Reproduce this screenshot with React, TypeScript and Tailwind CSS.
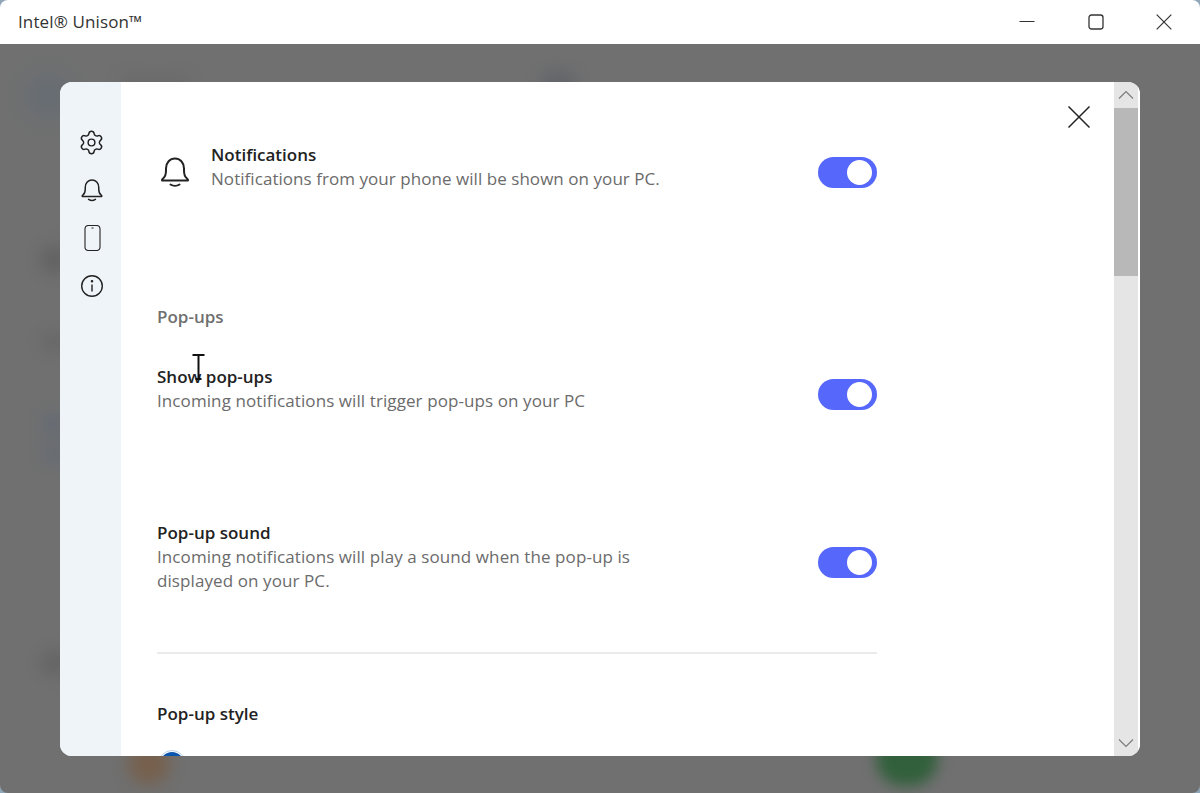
import React from "react";
import { Settings } from "lucide-react";

const font = { fontFamily: '"Open Sans", "Noto Sans", sans-serif' };

function Toggle() {
  return (
    <div className="flex h-[31px] w-[59px] shrink-0 items-center justify-end rounded-full bg-[#5668fb] pr-[5px]">
      <div className="h-[25px] w-[25px] rounded-full bg-white" />
    </div>
  );
}

function BellIcon({ size }: { size: number }) {
  return (
    <svg width={size} height={size} viewBox="0 0 32 32" fill="none" stroke="#222222" strokeWidth="2" strokeLinecap="round" strokeLinejoin="round">
      <path d="M3 24.500h26c.3-1-.3-1.500-1-2-2.500-1.800-3-4-3-8v-2C25 6.500 21 2.500 16 2.500S7 6.500 7 12.500v2c0 4-.5 6.200-3 8-.7.5-1.300 1-1 2Z" />
      <path d="M11.500 28.500c2.500 1.700 6.500 1.700 9 0" />
    </svg>
  );
}

function Row({ title, desc, top, toggleOffset }: { title: string; desc: React.ReactNode; top: string; toggleOffset: string }) {
  return (
    <div className={`flex w-[720px] items-start justify-between ${top}`}>
      <div>
        <div className="text-[17px] leading-[24px] font-semibold text-[#222222]">{title}</div>
        <div className="text-[17px] leading-[24px] tracking-[0.09px] text-[#6b6b6b]">{desc}</div>
      </div>
      <div className={toggleOffset}>
        <Toggle />
      </div>
    </div>
  );
}

export default function App() {
  return (
    <div className="h-[793px] w-[1200px] overflow-hidden bg-[#8fa6b8]" style={font}>
      <div className="flex h-full w-full flex-col overflow-hidden rounded-[8px]">
        <header className="flex h-[44px] shrink-0 items-center justify-between bg-white pr-[3px] pl-[18px]">
          <span className="text-[17px] leading-[20px] tracking-[0.12px] text-[#333333]">Intel® Unison™</span>
          <div className="flex items-center">
            <div className="flex h-[44px] w-[69px] items-center justify-center">
              <svg width="16" height="16" viewBox="0 0 16 16" stroke="#333333" strokeWidth="1" fill="none">
                <path d="M0.500 7.500h15" />
              </svg>
            </div>
            <div className="flex h-[44px] w-[69px] items-center justify-center">
              <svg width="16" height="16" viewBox="0 0 16 16" stroke="#333333" strokeWidth="1.300" fill="none">
                <rect x="1" y="1" width="14" height="14" rx="2.500" />
              </svg>
            </div>
            <div className="flex h-[44px] w-[67px] items-center justify-center">
              <svg width="16" height="16" viewBox="0 0 16 16" stroke="#333333" strokeWidth="1.200" fill="none">
                <path d="M0.700 0.700l14.600 14.600M15.300 0.700L0.700 15.300" />
              </svg>
            </div>
          </div>
        </header>

        <div className="relative min-h-0 flex-1 overflow-hidden bg-[#707070] pt-[38px] pl-[60px]">
          {/* Blurred app content behind the dialog */}
          <div className="absolute left-[26px] top-[30px] h-[44px] w-[44px] rounded-full bg-[#5c6a78] opacity-50 blur-[12px]" />
          <div className="absolute left-[120px] top-[32px] h-[12px] w-[70px] rounded-full bg-[#5e5e5e] opacity-40 blur-[8px]" />
          <div className="absolute left-[540px] top-[26px] h-[28px] w-[36px] rounded-full bg-[#5a5e66] opacity-60 blur-[8px]" />
          <div className="absolute left-[40px] top-[202px] h-[28px] w-[30px] rounded-full bg-[#555555] opacity-50 blur-[8px]" />
          <div className="absolute left-[40px] top-[288px] h-[20px] w-[30px] rounded-full bg-[#606060] opacity-50 blur-[8px]" />
          <div className="absolute left-[40px] top-[368px] h-[24px] w-[30px] rounded-full bg-[#5d6878] opacity-50 blur-[8px]" />
          <div className="absolute left-[40px] top-[402px] h-[18px] w-[30px] rounded-full bg-[#5d6878] opacity-50 blur-[8px]" />
          <div className="absolute left-[40px] top-[606px] h-[26px] w-[30px] rounded-full bg-[#5a5a5a] opacity-50 blur-[8px]" />
          <div className="absolute left-[128px] top-[700px] h-[40px] w-[42px] rounded-full bg-[#7a5a3e] opacity-70 blur-[8px]" />
          <div className="absolute left-[876px] top-[688px] h-[54px] w-[62px] rounded-full bg-[#32603c] blur-[7px]" />

          <div className="relative flex h-[674px] w-[1080px] overflow-hidden rounded-[12px] bg-white">
            <nav className="flex w-[61px] shrink-0 flex-col items-center gap-[24px] bg-[#eff4f9] pt-[48px] pl-[2px]">
              <Settings size={27} color="#222222" strokeWidth={1.300} className="-my-[1.500px]" />
              <BellIcon size={24} />
              <svg width="24" height="26" viewBox="0 0 24 26" fill="none" stroke="#222222" strokeWidth="1.100" className="-my-[1px]">
                <rect x="5" y="0.500" width="15" height="25" rx="3.500" />
                <path d="M11.500 3h2" strokeWidth="1.200" />
              </svg>
              <svg width="24" height="24" viewBox="0 0 24 24" fill="none" stroke="#222222" strokeWidth="1.400">
                <circle cx="12" cy="12" r="10.300" />
                <path d="M12 10.500v7" />
                <circle cx="12" cy="7.300" r="0.600" fill="#222222" />
              </svg>
            </nav>

            <main className="relative min-w-0 flex-1 overflow-hidden pl-[36px]">
              <div className="pt-[61px]">
                <div className="flex w-[720px] items-start justify-between">
                  <div className="flex">
                    <div className="mt-[13px] ml-[2px] w-[52px]">
                      <BellIcon size={32} />
                    </div>
                    <div>
                      <div className="text-[17px] leading-[24px] font-semibold text-[#222222]">Notifications</div>
                      <div className="text-[17px] leading-[24px] tracking-[0.05px] text-[#6b6b6b]">Notifications from your phone will be shown on your PC.</div>
                    </div>
                  </div>
                  <div className="mt-[14px]">
                    <Toggle />
                  </div>
                </div>

                <div className="mt-[114px] text-[17px] leading-[24px] font-semibold text-[#6f6f6f]">Pop-ups</div>

                <Row
                  top="mt-[36px]"
                  toggleOffset="mt-[14px]"
                  title="Show pop-ups"
                  desc="Incoming notifications will trigger pop-ups on your PC"
                />
                <Row
                  top="mt-[108px]"
                  toggleOffset="mt-[26px]"
                  title="Pop-up sound"
                  desc={<>Incoming notifications will play a sound when the pop-up is<br />displayed on your PC.</>}
                />

                <div className="mt-[59px] h-[2px] w-[720px] bg-[#ebebeb]" />

                <div className="mt-[48px] text-[17px] leading-[24px] font-semibold text-[#222222]">Pop-up style</div>

                <div className="mt-[24px] ml-[1px] flex h-[28px] w-[28px] items-center justify-center rounded-full border border-[#bcd0e6]">
                  <div className="h-[24px] w-[24px] rounded-full bg-[#0a55ad]" />
                </div>
              </div>

              <button className="absolute top-[23px] right-[23px] flex h-[24px] w-[24px] items-center justify-center" aria-label="Close">
                <svg width="24" height="24" viewBox="0 0 24 24" stroke="#222222" strokeWidth="1.500" fill="none">
                  <path d="M1.500 1.500l21 21M22.500 1.500l-21 21" />
                </svg>
              </button>
            </main>

            <div className="flex w-[26px] shrink-0 border-r-2 border-white">
              <div className="flex w-full flex-col items-center bg-[#e5e5e5]">
                <div className="flex h-[26px] w-full shrink-0 items-center justify-center">
                  <svg width="16" height="10" viewBox="0 0 16 10" fill="none" stroke="#7a7a7a" strokeWidth="1.100">
                    <path d="M1 8.500L8 1.500l7 7" />
                  </svg>
                </div>
                <div className="h-[168px] w-full bg-[#b8b8b8]" />
                <div className="flex-1" />
                <div className="flex h-[26px] w-full shrink-0 items-center justify-center pb-[1px]">
                  <svg width="16" height="10" viewBox="0 0 16 10" fill="none" stroke="#7a7a7a" strokeWidth="1.100">
                    <path d="M1 1.500l7 7 7-7" />
                  </svg>
                </div>
              </div>
            </div>

            {/* Text cursor over the content */}
            <svg className="absolute left-[132px] top-[272px]" width="13" height="28" viewBox="0 0 13 28" fill="none">
              <path d="M0.500 1h12M6.500 1v24M3.500 25h6" stroke="#111111" strokeWidth="2" />
            </svg>
          </div>
        </div>
      </div>
    </div>
  );
}
